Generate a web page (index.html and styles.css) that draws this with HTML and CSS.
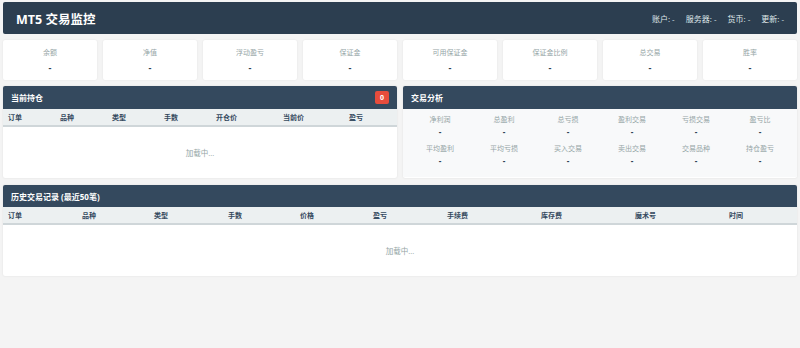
FILE: index.html
```html
<!DOCTYPE html>
<html lang="zh-CN">
<head>
    <meta charset="UTF-8">
    <meta name="viewport" content="width=device-width, initial-scale=1.0">
    <title>MT5 交易监控</title>
    <link rel="stylesheet" href="styles.css">
</head>
<body>

    <div class="header">
        <h1>MT5 交易监控</h1>
        <div class="header-info">
            <span>账户: -</span>
            <span>服务器: -</span>
            <span>货币: -</span>
            <span>更新: -</span>
        </div>
    </div>

    <!-- 账户概览 -->
    <div class="stats">
        <div class="stat-card"><div class="stat-label">余额</div><div class="stat-value">-</div></div>
        <div class="stat-card"><div class="stat-label">净值</div><div class="stat-value">-</div></div>
        <div class="stat-card"><div class="stat-label">浮动盈亏</div><div class="stat-value">-</div></div>
        <div class="stat-card"><div class="stat-label">保证金</div><div class="stat-value">-</div></div>
        <div class="stat-card"><div class="stat-label">可用保证金</div><div class="stat-value">-</div></div>
        <div class="stat-card"><div class="stat-label">保证金比例</div><div class="stat-value">-</div></div>
        <div class="stat-card"><div class="stat-label">总交易</div><div class="stat-value">-</div></div>
        <div class="stat-card"><div class="stat-label">胜率</div><div class="stat-value">-</div></div>
    </div>

    <div class="row">
        <!-- 当前持仓 -->
        <div class="panel">
            <div class="panel-header">
                <span>当前持仓</span>
                <span class="badge">0</span>
            </div>
            <table class="positions">
                <colgroup>
                    <col class="w52"><col class="w52"><col class="w52"><col class="w52"><col class="w67"><col class="w66"><col>
                </colgroup>
                <thead>
                    <tr><th>订单</th><th>品种</th><th>类型</th><th>手数</th><th>开仓价</th><th>当前价</th><th>盈亏</th></tr>
                </thead>
                <tbody>
                    <tr><td colspan="7" class="loading">加载中...</td></tr>
                </tbody>
            </table>
        </div>

        <!-- 交易分析 -->
        <div class="panel">
            <div class="panel-header"><span>交易分析</span></div>
            <div class="analysis">
                <div class="metric"><div class="metric-label">净利润</div><div class="metric-value">-</div></div>
                <div class="metric"><div class="metric-label">总盈利</div><div class="metric-value">-</div></div>
                <div class="metric"><div class="metric-label">总亏损</div><div class="metric-value">-</div></div>
                <div class="metric"><div class="metric-label">盈利交易</div><div class="metric-value">-</div></div>
                <div class="metric"><div class="metric-label">亏损交易</div><div class="metric-value">-</div></div>
                <div class="metric"><div class="metric-label">盈亏比</div><div class="metric-value">-</div></div>
                <div class="metric"><div class="metric-label">平均盈利</div><div class="metric-value">-</div></div>
                <div class="metric"><div class="metric-label">平均亏损</div><div class="metric-value">-</div></div>
                <div class="metric"><div class="metric-label">买入交易</div><div class="metric-value">-</div></div>
                <div class="metric"><div class="metric-label">卖出交易</div><div class="metric-value">-</div></div>
                <div class="metric"><div class="metric-label">交易品种</div><div class="metric-value">-</div></div>
                <div class="metric"><div class="metric-label">持仓盈亏</div><div class="metric-value">-</div></div>
            </div>
        </div>
    </div>

    <!-- 历史交易 -->
    <div class="panel history">
        <div class="panel-header"><span>历史交易记录 (最近50笔)</span></div>
        <table class="deals">
            <colgroup>
                <col class="w74"><col class="w72"><col class="w74"><col class="w72"><col class="w73"><col class="w74"><col class="w94"><col class="w94"><col class="w94"><col>
            </colgroup>
            <thead>
                <tr><th>订单</th><th>品种</th><th>类型</th><th>手数</th><th>价格</th><th>盈亏</th><th>手续费</th><th>库存费</th><th>魔术号</th><th>时间</th></tr>
            </thead>
            <tbody>
                <tr><td colspan="10" class="loading">加载中...</td></tr>
            </tbody>
        </table>
    </div>

</body>
</html>
```

FILE: styles.css
```css
body {
    font-family: 'Open Sans', 'Noto Sans CJK SC', sans-serif;
    background-color: #f4f4f4;
    margin: 0;
    padding: 2px 3px;
    color: #2c3e50;
}
.header {
    background-color: #2c3e50;
    color: #fff;
    height: 32px;
    padding: 0 13px;
    display: flex;
    align-items: center;
    justify-content: space-between;
    border-radius: 2px;
}
.header h1 {
    font-size: 12.5px;
    font-weight: bold;
    margin: 0;
}
.header-info {
    display: flex;
    gap: 11px;
    font-size: 8px;
    color: #dfe6e9;
}
/* 概览卡片 */
.stats {
    display: grid;
    grid-template-columns: repeat(8, 1fr);
    gap: 6px;
    margin-top: 6px;
}
.stat-card {
    background-color: #fff;
    height: 40px;
    border-radius: 2px;
    box-shadow: 0 0 2px rgba(0, 0, 0, 0.08);
    text-align: center;
    padding-top: 8px;
    box-sizing: border-box;
}
.stat-label {
    font-size: 7px;
    color: #95a5a6;
    line-height: 10px;
}
.stat-value {
    font-size: 9px;
    font-weight: bold;
    color: #2c3e50;
    margin-top: 4px;
    line-height: 12px;
}
.row {
    display: grid;
    grid-template-columns: 1fr 1fr;
    gap: 6px;
    margin-top: 6px;
}
.panel {
    background-color: #fff;
    border-radius: 2px;
    box-shadow: 0 0 2px rgba(0, 0, 0, 0.1);
    overflow: hidden;
}
.panel-header {
    background-color: #34495e;
    color: #fff;
    height: 23px;
    padding: 0 8px;
    display: flex;
    align-items: center;
    justify-content: space-between;
    font-size: 8px;
    font-weight: bold;
}
.badge {
    background-color: #e74c3c;
    color: #fff;
    font-size: 7px;
    border-radius: 2px;
    padding: 2px 5px;
    line-height: 9px;
}
table {
    width: 100%;
    border-collapse: collapse;
    table-layout: fixed;
}
th {
    background-color: #ecf0f1;
    text-align: left;
    font-size: 7px;
    font-weight: bold;
    color: #34495e;
    height: 16px;
    padding: 0 5px;
    border-bottom: 2px solid #cfd6d9;
}
.loading {
    text-align: center;
    color: #95a5a6;
    font-size: 7.5px;
    height: 49px;
}
.history .panel-header {
    height: 22px;
}
.w52 { width: 52px; }
.w66 { width: 66px; }
.w67 { width: 67px; }
.w72 { width: 72px; }
.w73 { width: 73px; }
.w74 { width: 74px; }
.w94 { width: 94px; }
/* 交易分析 */
.analysis {
    background-color: #f8f9fa;
    display: grid;
    grid-template-columns: repeat(6, 1fr);
    row-gap: 3px;
    padding: 6px 5px 7px;
    height: 68px;
    box-sizing: border-box;
}
.metric {
    text-align: center;
}
.metric-label {
    font-size: 7px;
    color: #95a5a6;
    line-height: 10px;
}
.metric-value {
    font-size: 8px;
    font-weight: bold;
    color: #2c3e50;
    margin-top: 0;
    line-height: 14px;
}
.history {
    margin-top: 7px;
}
```
